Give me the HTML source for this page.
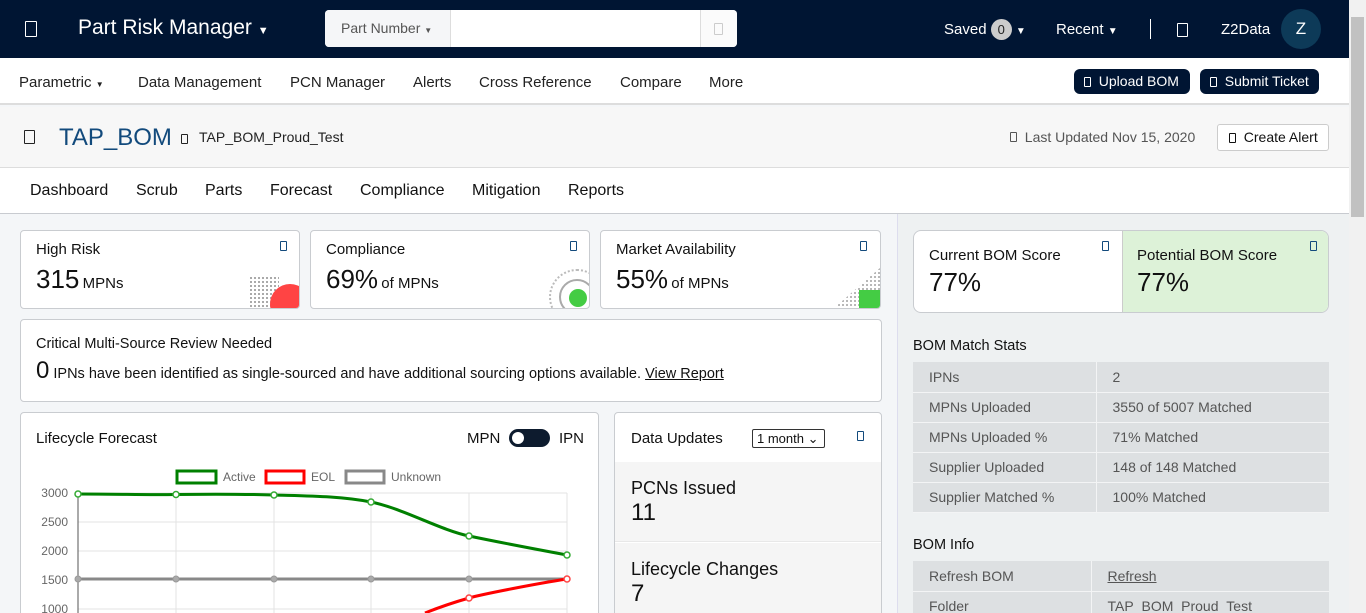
<!DOCTYPE html>
<html style="width:1366px;height:613px;overflow:hidden"><head><meta charset="utf-8"><style>
*{box-sizing:border-box;margin:0;padding:0}
body{width:1366px;height:613px;overflow:hidden;font-family:"Liberation Sans",Arial,sans-serif;color:#212529;background:#f4f6f8;position:relative;font-size:14px}
.a{position:absolute}
.ic{display:inline-block;width:9px;height:12px;border:1.3px solid currentColor;border-radius:1px}
.card{position:absolute;background:#fff;border:1px solid #c9ccd0;border-radius:4px;overflow:hidden}
.lbl{font-size:15px;color:#111}
.big{font-size:26px;color:#111}
.btn{position:absolute;background:#001533;color:#fff;border-radius:6px;font-size:14px;height:25px;line-height:25px;padding:0 10px}
table{border-collapse:collapse;font-size:14px;color:#555}
td{height:30px;padding-left:16px;border-bottom:1px solid #f3f4f5;background:#dde0e2}
td+td{border-left:1px solid #f3f4f5}
</style></head><body>
<div class="a" style="left:0;top:0;width:1349px;height:58px;background:#001533"></div>
<div class="a ic" style="left:25px;top:21px;width:12px;height:16px;color:#fff"></div>
<div class="a" style="left:78px;top:16px;font-size:21px;color:#fff">Part Risk Manager <span style="font-size:11px">▼</span></div>
<div class="a" style="left:325px;top:10px;width:412px;height:37px;background:#fff;border-radius:4px;overflow:hidden">
 <div class="a" style="left:0;top:0;width:126px;height:37px;background:#f5f6f8;border-right:1px solid #ddd;color:#555;font-size:14px;line-height:37px;padding-left:16px">Part Number <span style="font-size:8px">▼</span></div>
 <div class="a" style="left:375px;top:0;width:37px;height:37px;border-left:1px solid #ddd;background:#fbfbfb"></div>
 <div class="a ic" style="left:389px;top:13px;color:#ccc"></div>
</div>
<div class="a" style="left:944px;top:19px;font-size:15px;color:#fff">Saved <span style="display:inline-block;width:21px;height:21px;border-radius:50%;background:#ccc;color:#222;text-align:center;line-height:21px;font-size:13px">0</span> <span style="font-size:10px">▼</span></div>
<div class="a" style="left:1056px;top:21px;font-size:15px;color:#fff">Recent <span style="font-size:10px">▼</span></div>
<div class="a" style="left:1150px;top:19px;width:1px;height:20px;background:#fff"></div>
<div class="a ic" style="left:1177px;top:23px;width:11px;height:14px;color:#fff"></div>
<div class="a" style="left:1221px;top:21px;font-size:15px;color:#fff">Z2Data</div>
<div class="a" style="left:1281px;top:9px;width:40px;height:40px;border-radius:50%;background:#0d3a58;color:#fff;font-size:17px;text-align:center;line-height:40px">Z</div>
<div class="a" style="left:0;top:58px;width:1349px;height:47px;background:#fff;border-bottom:2px solid #ddd"></div>
<div class="a" style="left:19px;top:74px;font-size:15px;color:#222">Parametric <span style="font-size:8px">▼</span></div>
<div class="a" style="left:138px;top:74px;font-size:15px;color:#222">Data Management</div>
<div class="a" style="left:290px;top:74px;font-size:15px;color:#222">PCN Manager</div>
<div class="a" style="left:413px;top:74px;font-size:15px;color:#222">Alerts</div>
<div class="a" style="left:479px;top:74px;font-size:15px;color:#222">Cross Reference</div>
<div class="a" style="left:620px;top:74px;font-size:15px;color:#222">Compare</div>
<div class="a" style="left:709px;top:74px;font-size:15px;color:#222">More</div>
<div class="btn" style="left:1074px;top:69px;width:116px"><span class="ic" style="width:7px;height:10px;vertical-align:-1px"></span>&nbsp; Upload BOM</div>
<div class="btn" style="left:1200px;top:69px;width:119px"><span class="ic" style="width:7px;height:10px;vertical-align:-1px"></span>&nbsp; Submit Ticket</div>
<div class="a" style="left:0;top:107px;width:1349px;height:61px;background:#f7f7f7;border-bottom:1px solid #ddd"></div>
<div class="a ic" style="left:24px;top:130px;width:11px;height:14px;color:#222"></div>
<div class="a" style="left:59px;top:124px;font-size:24px;color:#124a7c">TAP_BOM</div>
<div class="a ic" style="left:181px;top:134px;width:7px;height:10px;color:#222"></div>
<div class="a" style="left:199px;top:129px;font-size:14px;color:#222">TAP_BOM_Proud_Test</div>
<div class="a" style="left:1010px;top:129px;font-size:14px;color:#555"><span class="ic" style="width:7px;height:10px"></span>&nbsp; Last Updated Nov 15, 2020</div>
<div class="a" style="left:1217px;top:124px;width:112px;height:27px;border:1px solid #ccc;border-radius:3px;background:#fff;font-size:14px;line-height:25px;padding-left:11px;color:#111"><span class="ic" style="width:7px;height:10px;vertical-align:-1px"></span>&nbsp; Create Alert</div>
<div class="a" style="left:0;top:168px;width:1349px;height:46px;background:#fff;border-bottom:1px solid #c8cbd0"></div>
<div class="a" style="left:30px;top:182px;font-size:16px;color:#111">Dashboard</div>
<div class="a" style="left:136px;top:182px;font-size:16px;color:#111">Scrub</div>
<div class="a" style="left:205px;top:182px;font-size:16px;color:#111">Parts</div>
<div class="a" style="left:270px;top:182px;font-size:16px;color:#111">Forecast</div>
<div class="a" style="left:360px;top:182px;font-size:16px;color:#111">Compliance</div>
<div class="a" style="left:472px;top:182px;font-size:16px;color:#111">Mitigation</div>
<div class="a" style="left:568px;top:182px;font-size:16px;color:#111">Reports</div>
<div class="a" style="left:897px;top:214px;width:452px;height:399px;background:#eef1f2;border-left:1px solid #dde"></div>
<div class="a" style="left:1349px;top:0;width:17px;height:613px;background:#f1f1f1"></div>
<div class="a" style="left:1351px;top:17px;width:13px;height:200px;background:#c1c1c1"></div>
<div class="card" style="left:20px;top:230px;width:280px;height:79px">
 <div class="a lbl" style="left:15px;top:10px">High Risk</div><div class="a ic" style="left:259px;top:10px;width:7px;height:10px;color:#124a7c"></div>
 <div class="a big" style="left:15px;top:33px">315 <span style="font-size:15px;margin-left:-4px">MPNs</span></div>
 <div class="a" style="left:228px;top:45px;width:30px;height:40px;background:radial-gradient(#999 0.8px,transparent 1.2px) 0 0/4px 4px"></div>
 <div class="a" style="left:249px;top:53px;width:40px;height:40px;border-radius:50%;background:#f44"></div>
</div>
<div class="card" style="left:310px;top:230px;width:280px;height:79px">
 <div class="a lbl" style="left:15px;top:10px">Compliance</div><div class="a ic" style="left:259px;top:10px;width:7px;height:10px;color:#124a7c"></div>
 <div class="a big" style="left:15px;top:33px">69% <span style="font-size:15px;margin-left:-4px">of MPNs</span></div>
 <div class="a" style="left:238px;top:38px;width:56px;height:56px;border-radius:50%;border:2px dotted #bbb"></div>
 <div class="a" style="left:248px;top:48px;width:36px;height:36px;border-radius:50%;border:2px solid #aaa"></div>
 <div class="a" style="left:258px;top:58px;width:18px;height:18px;border-radius:50%;background:#4c4"></div>
</div>
<div class="card" style="left:600px;top:230px;width:281px;height:79px">
 <div class="a lbl" style="left:15px;top:10px">Market Availability</div><div class="a ic" style="left:259px;top:10px;width:7px;height:10px;color:#124a7c"></div>
 <div class="a big" style="left:15px;top:33px">55% <span style="font-size:15px;margin-left:-4px">of MPNs</span></div>
 <div class="a" style="left:232px;top:36px;width:48px;height:42px;background:radial-gradient(#aaa 0.8px,transparent 1.2px) 0 0/4px 4px;clip-path:polygon(100% 0,100% 100%,0 100%)"></div>
 <div class="a" style="left:258px;top:59px;width:22px;height:20px;background:#4c4"></div>
</div>
<div class="card" style="left:20px;top:319px;width:862px;height:83px">
 <div class="a lbl" style="left:15px;top:16px;font-size:14.5px">Critical Multi-Source Review Needed</div>
 <div class="a" style="left:15px;top:37px;font-size:14.5px;color:#111"><span style="font-size:24px">0</span> IPNs have been identified as single-sourced and have additional sourcing options available. <u>View Report</u></div>
</div>
<div class="card" style="left:20px;top:412px;width:579px;height:210px">
 <div class="a lbl" style="left:15px;top:17px">Lifecycle Forecast</div>
 <div class="a lbl" style="left:446px;top:17px">MPN</div>
 <div class="a" style="left:488px;top:16px;width:41px;height:18px;border-radius:9px;background:#0d1b2e"></div>
 <div class="a" style="left:491px;top:19px;width:12px;height:12px;border-radius:50%;background:#fff"></div>
 <div class="a lbl" style="left:538px;top:17px">IPN</div>
</div>
<svg class="a" style="left:20px;top:412px" width="579" height="201">
 <g font-family="Liberation Sans,Arial" font-size="12" fill="#666">
 <rect x="157" y="59" width="39" height="12" fill="#fff" stroke="#008000" stroke-width="3"/><text x="203" y="69">Active</text>
 <rect x="246" y="59" width="38" height="12" fill="#fff" stroke="#f00" stroke-width="3"/><text x="291" y="69">EOL</text>
 <rect x="326" y="59" width="38" height="12" fill="#fff" stroke="#888" stroke-width="3"/><text x="371" y="69">Unknown</text>
 <text x="48" y="85" text-anchor="end">3000</text><text x="48" y="114" text-anchor="end">2500</text><text x="48" y="143" text-anchor="end">2000</text><text x="48" y="172" text-anchor="end">1500</text><text x="48" y="201" text-anchor="end">1000</text>
 </g>
 <g stroke="#e3e3e3" stroke-width="1">
 <line x1="58" y1="81" x2="547" y2="81"/><line x1="58" y1="110" x2="547" y2="110"/><line x1="58" y1="139" x2="547" y2="139"/><line x1="58" y1="168" x2="547" y2="168"/><line x1="58" y1="197" x2="547" y2="197"/>
 <line x1="156" y1="81" x2="156" y2="201"/><line x1="254" y1="81" x2="254" y2="201"/><line x1="351" y1="81" x2="351" y2="201"/><line x1="449" y1="81" x2="449" y2="201"/><line x1="547" y1="81" x2="547" y2="201"/>
 </g>
 <line x1="58" y1="81" x2="58" y2="201" stroke="#555"/>
 <path d="M58 82 C100 82,120 83,156 82.5 S220 82,254 83 S320 84,351 90 S420 118,449 124 S520 138,547 143" fill="none" stroke="#008000" stroke-width="3"/>
 <path d="M58 167 L547 167" stroke="#888" stroke-width="3"/>
 <path d="M405 201 C420 195,435 190,449 186 S520 171,547 167" fill="none" stroke="#f00" stroke-width="3"/>
 <g fill="#fff" stroke="#3a3" stroke-width="1.5"><circle cx="58" cy="82" r="3"/><circle cx="156" cy="82.5" r="3"/><circle cx="254" cy="83" r="3"/><circle cx="351" cy="90" r="3"/><circle cx="449" cy="124" r="3"/><circle cx="547" cy="143" r="3"/></g>
 <g fill="#aaa" stroke="#999"><circle cx="58" cy="167" r="3"/><circle cx="156" cy="167" r="3"/><circle cx="254" cy="167" r="3"/><circle cx="351" cy="167" r="3"/><circle cx="449" cy="167" r="3"/></g>
 <g fill="#fff" stroke="#f44" stroke-width="1.5"><circle cx="449" cy="186" r="3"/><circle cx="547" cy="167" r="3"/></g>
</svg>
<div class="card" style="left:614px;top:412px;width:268px;height:210px">
 <div class="a lbl" style="left:16px;top:17px">Data Updates</div>
 <div class="a" style="left:137px;top:16px;width:73px;height:19px;border:1px solid #333;border-radius:2px;font-size:13px;line-height:17px;padding-left:4px;color:#111">1 month ⌄</div>
 <div class="a ic" style="left:242px;top:18px;width:7px;height:10px;color:#124a7c"></div>
 <div class="a" style="left:0;top:49px;width:268px;height:80px;background:#f5f5f5;border-bottom:1px solid #e8e8e8"></div>
 <div class="a" style="left:16px;top:65px;font-size:18px;color:#111">PCNs Issued</div>
 <div class="a" style="left:16px;top:86px;font-size:24px;color:#111">11</div>
 <div class="a" style="left:0;top:130px;width:268px;height:80px;background:#f5f5f5"></div>
 <div class="a" style="left:16px;top:146px;font-size:18px;color:#111">Lifecycle Changes</div>
 <div class="a" style="left:16px;top:167px;font-size:24px;color:#111">7</div>
</div>
<div class="card" style="left:913px;top:230px;width:416px;height:83px;border-radius:8px">
 <div class="a" style="left:208px;top:0;width:208px;height:83px;background:#ddf2d8;border-left:1px solid #ccc"></div>
 <div class="a" style="left:15px;top:16px;font-size:15px;color:#111">Current BOM Score</div>
 <div class="a" style="left:15px;top:36px;font-size:26px;color:#111">77%</div>
 <div class="a ic" style="left:188px;top:10px;width:7px;height:10px;color:#124a7c"></div>
 <div class="a" style="left:223px;top:16px;font-size:15px;color:#111">Potential BOM Score</div>
 <div class="a" style="left:223px;top:36px;font-size:26px;color:#111">77%</div>
 <div class="a ic" style="left:396px;top:10px;width:7px;height:10px;color:#124a7c"></div>
</div>
<div class="a" style="left:913px;top:338px;font-size:14.5px;color:#111">BOM Match Stats</div>
<table class="a" style="left:913px;top:362px;width:416px">
<tr><td style="width:183px">IPNs</td><td>2</td></tr>
<tr><td>MPNs Uploaded</td><td>3550 of 5007 Matched</td></tr>
<tr><td>MPNs Uploaded %</td><td>71% Matched</td></tr>
<tr><td>Supplier Uploaded</td><td>148 of 148 Matched</td></tr>
<tr><td>Supplier Matched %</td><td>100% Matched</td></tr>
</table>
<div class="a" style="left:913px;top:537px;font-size:14.5px;color:#111">BOM Info</div>
<table class="a" style="left:913px;top:561px;width:416px">
<tr><td style="width:178px">Refresh BOM</td><td><u>Refresh</u></td></tr>
<tr><td>Folder</td><td>TAP_BOM_Proud_Test</td></tr>
</table>
</body></html>
